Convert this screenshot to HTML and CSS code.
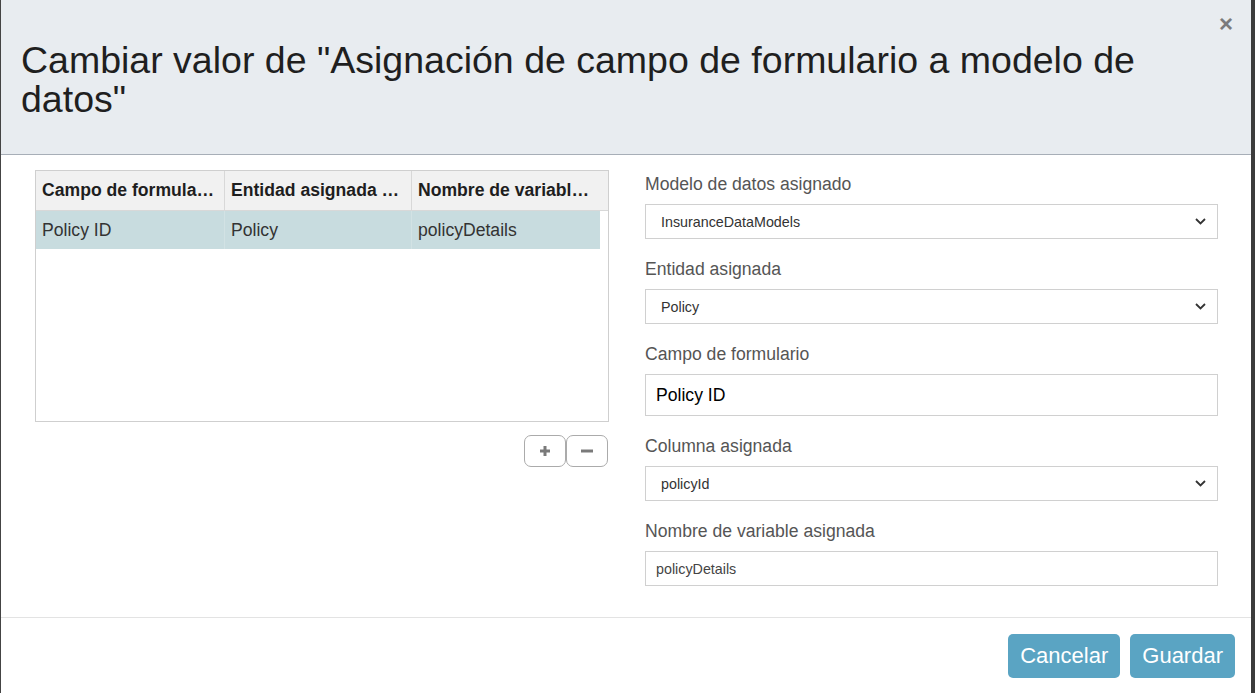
FILE: index.html
```html
<!DOCTYPE html>
<html lang="es">
<head>
<meta charset="utf-8">
<title>Cambiar valor</title>
<link rel="stylesheet" href="styles.css">
</head>
<body>
<div class="modal">
  <div class="modal-header">
    <h1 class="modal-title">Cambiar valor de "Asignación de campo de formulario a modelo de datos"</h1>
    <button class="close" type="button" aria-label="Cerrar">&times;</button>
  </div>
  <div class="modal-body">
    <div class="left-col">
      <div class="grid">
        <div class="grid-head">
          <div class="cell">Campo de formula…</div>
          <div class="cell">Entidad asignada …</div>
          <div class="cell">Nombre de variabl…</div>
        </div>
        <div class="grid-row selected">
          <div class="cell">Policy ID</div>
          <div class="cell">Policy</div>
          <div class="cell">policyDetails</div>
        </div>
      </div>
      <div class="grid-tools">
        <button class="tool-btn" type="button" aria-label="Agregar">
          <svg width="12" height="12" viewBox="0 0 12 12"><path d="M6 1v10M1 6h10" stroke="#7a7a7a" stroke-width="3"/></svg>
        </button>
        <button class="tool-btn" type="button" aria-label="Quitar">
          <svg width="14" height="12" viewBox="0 0 14 12"><path d="M1 6h12" stroke="#7a7a7a" stroke-width="3"/></svg>
        </button>
      </div>
    </div>
    <div class="right-col">
      <div class="form-group">
        <label class="form-label">Modelo de datos asignado</label>
        <div class="select"><span>InsuranceDataModels</span><svg class="chev" width="11" height="7" viewBox="0 0 11 7"><path d="M1 1l4.5 4.5L10 1" fill="none" stroke="#333" stroke-width="1.8"/></svg></div>
      </div>
      <div class="form-group">
        <label class="form-label">Entidad asignada</label>
        <div class="select"><span>Policy</span><svg class="chev" width="11" height="7" viewBox="0 0 11 7"><path d="M1 1l4.5 4.5L10 1" fill="none" stroke="#333" stroke-width="1.8"/></svg></div>
      </div>
      <div class="form-group">
        <label class="form-label">Campo de formulario</label>
        <div class="input input-lg">Policy ID</div>
      </div>
      <div class="form-group">
        <label class="form-label">Columna asignada</label>
        <div class="select"><span>policyId</span><svg class="chev" width="11" height="7" viewBox="0 0 11 7"><path d="M1 1l4.5 4.5L10 1" fill="none" stroke="#333" stroke-width="1.8"/></svg></div>
      </div>
      <div class="form-group">
        <label class="form-label">Nombre de variable asignada</label>
        <div class="input">policyDetails</div>
      </div>
    </div>
  </div>
  <div class="modal-footer">
    <button class="btn" type="button">Cancelar</button>
    <button class="btn" type="button">Guardar</button>
  </div>
</div>
</body>
</html>
```
FILE: styles.css
```css
* { box-sizing: border-box; }
html, body { margin: 0; padding: 0; }
body {
  font-family: "Liberation Sans", Arial, sans-serif;
  background: #ffffff;
  color: #333;
}
.modal {
  width: 1255px;
  height: 693px;
  display: flex;
  flex-direction: column;
  border-left: 1px solid #444;
  border-right: 4px solid #3c3c3c;
  background: #fff;
}
.modal-header {
  height: 155px;
  background: #e8ecf0;
  border-bottom: 1px solid #a7aeb7;
  display: flex;
  align-items: flex-start;
  padding: 0 0 0 20px;
}
.modal-title {
  margin: 41px 0 0 0;
  flex: 1;
  font-size: 37.5px;
  line-height: 39px;
  font-weight: normal;
  color: #1f1f1f;
}
.close {
  background: none;
  border: 0;
  padding: 0;
  margin: 12px 18px 0 40px;
  font-family: "Liberation Sans", Arial, sans-serif;
  font-size: 24px;
  font-weight: bold;
  line-height: 24px;
  color: #7b7b7b;
}
.modal-body {
  flex: 1;
  display: flex;
  align-items: flex-start;
  padding: 15px 33px 0 34px;
  gap: 36px;
}
.left-col {
  width: 574px;
  display: flex;
  flex-direction: column;
}
.grid {
  height: 252px;
  border: 1px solid #cfcfcf;
}
.grid-head {
  display: grid;
  grid-template-columns: 189px 187px 1fr;
  height: 40px;
  background: #f1f1f1;
  border-bottom: 1px solid #d8d8d8;
}
.grid-head .cell {
  font-weight: bold;
  font-size: 17.6px;
  color: #1e1e1e;
  border-right: 1px solid #d8d8d8;
  padding: 0 6px;
  display: flex;
  align-items: center;
  white-space: nowrap;
  overflow: hidden;
}
.grid-head .cell:last-child { border-right: 0; }
.grid-row {
  display: grid;
  grid-template-columns: 189px 187px 1fr;
  width: 564px;
  height: 38px;
}
.grid-row.selected { background: #c8dcdf; }
.grid-row .cell {
  font-size: 17.6px;
  color: #333;
  padding: 0 6px;
  display: flex;
  align-items: center;
  border-right: 1px solid #d2e2e4;
}
.grid-row .cell:last-child { border-right: 0; }
.grid-tools {
  display: flex;
  justify-content: flex-end;
  margin-top: 13px;
  padding-right: 1px;
}
.tool-btn {
  width: 42px;
  height: 32px;
  background: #fff;
  border: 1px solid #ababab;
  border-radius: 7px;
  display: flex;
  align-items: center;
  justify-content: center;
  padding: 0;
}
.right-col {
  width: 573px;
  margin-top: 4px;
  display: flex;
  flex-direction: column;
  gap: 20px;
}
.form-group {
  display: flex;
  flex-direction: column;
}
.form-label {
  font-size: 17.6px;
  line-height: 20px;
  color: #555;
  margin-bottom: 10px;
}
.select {
  height: 35px;
  border: 1px solid #d0d0d0;
  display: flex;
  align-items: center;
  justify-content: space-between;
  padding: 0 11px 0 15px;
  font-size: 14.3px;
  color: #333;
}
.chev { display: block; }
.input {
  height: 35px;
  border: 1px solid #d0d0d0;
  display: flex;
  align-items: center;
  padding: 0 10px;
  font-size: 14.3px;
  color: #444;
}
.input-lg {
  height: 42px;
  font-size: 17.6px;
  color: #000;
}
.modal-footer {
  height: 76px;
  border-top: 1px solid #e3e3e3;
  display: flex;
  justify-content: flex-end;
  align-items: flex-start;
  gap: 10px;
  padding: 16px 16px 0 0;
}
.btn {
  height: 44px;
  padding: 0 12px;
  background: #5aa4c3;
  border: 0;
  border-radius: 5px;
  color: #fff;
  font-family: "Liberation Sans", Arial, sans-serif;
  font-size: 22px;
}
```
